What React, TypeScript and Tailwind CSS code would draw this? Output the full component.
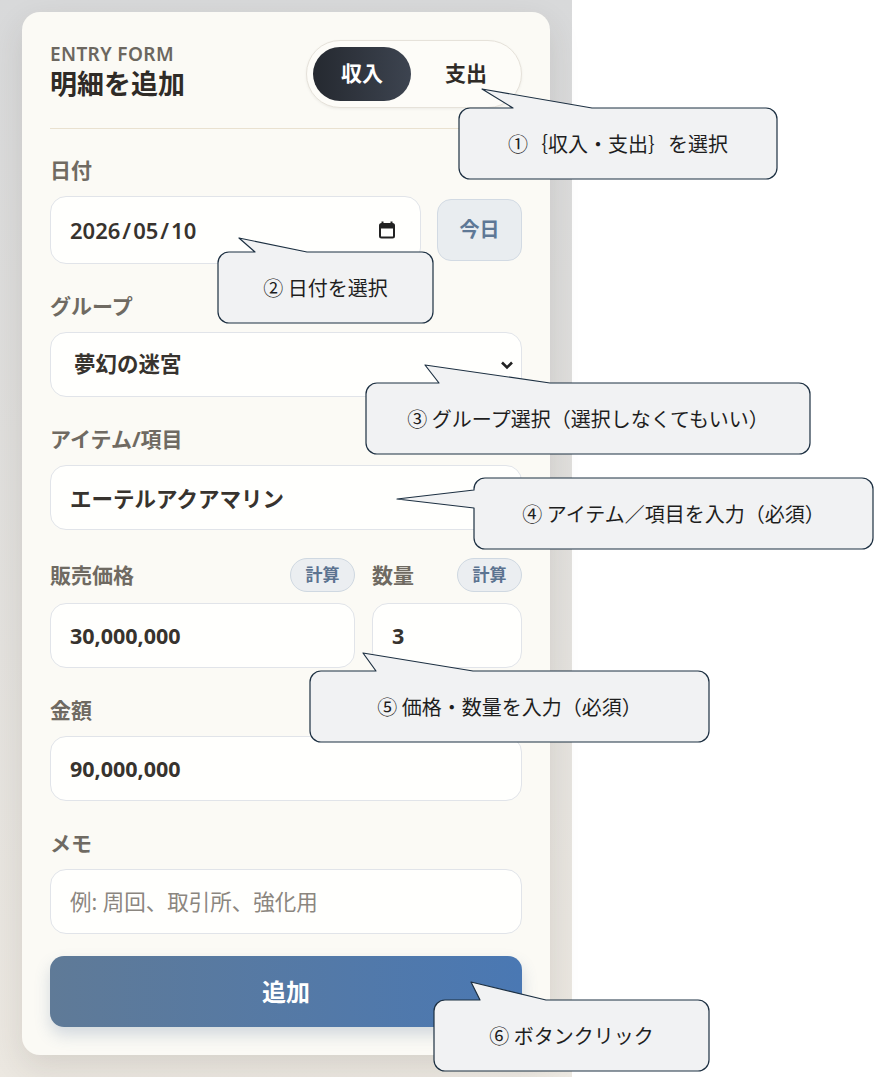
import React from "react";

type Tail = { side: "top" | "left"; a: number; b: number; tx: number; ty: number };

function calloutPath(w: number, h: number, r: number, t: Tail) {
  const arc = (x: number, y: number) => `A ${r} ${r} 0 0 1 ${x} ${y}`;
  if (t.side === "top") {
    return `M ${r} 0 L ${t.a} 0 L ${t.tx} ${t.ty} L ${t.b} 0 L ${w - r} 0 ${arc(w, r)} L ${w} ${h - r} ${arc(w - r, h)} L ${r} ${h} ${arc(0, h - r)} L 0 ${r} ${arc(r, 0)} Z`;
  }
  return `M ${r} 0 L ${w - r} 0 ${arc(w, r)} L ${w} ${h - r} ${arc(w - r, h)} L ${r} ${h} ${arc(0, h - r)} L 0 ${t.b} L ${t.tx} ${t.ty} L 0 ${t.a} L 0 ${r} ${arc(r, 0)} Z`;
}

function Callout({ className, w, h, tail, children }: { className: string; w: number; h: number; tail: Tail; children: React.ReactNode }) {
  return (
    <div className={`absolute flex items-center justify-center ${className}`}>
      <svg className="absolute left-0 top-0 overflow-visible" width={w} height={h}>
        <path d={calloutPath(w, h, 11, tail)} fill="#f1f2f3" stroke="#1d3042" strokeWidth="1.2" strokeLinejoin="round" />
      </svg>
      <span className="relative whitespace-nowrap font-['Noto_Sans_CJK_JP',sans-serif] text-[20px] text-[#1e1e1e]">{children}</span>
    </div>
  );
}

function Label({ children }: { children: React.ReactNode }) {
  return <div className="text-[21px] font-bold leading-[28px] text-[#6f6a62]">{children}</div>;
}

function CalcPill() {
  return (
    <button className="h-[34px] w-[65px] rounded-full border border-[#cfd8e1] bg-[#ebeef1] text-[17px] font-bold text-[#5b7390]">
      計算
    </button>
  );
}

const box = "h-[65px] w-full rounded-[16px] border border-[#e1e4e9] bg-[#fffffd] px-[19px] text-[21.5px] font-bold text-[#37332e] outline-none";

export default function App() {
  return (
    <div className="relative flex h-[1077px] w-[874px] overflow-hidden bg-white font-['Noto_Sans','Noto_Sans_CJK_JP',sans-serif]">
      <div className="h-full w-[572px] bg-gradient-to-b from-[#d8d9da] to-[#ece8e1] pl-[22px] pt-[12px]">
        <div className="w-[528px] rounded-[18px] bg-[#fbfaf5] p-[28px] shadow-[0_12px_32px_rgba(60,50,40,0.12)]">
          <div className="flex items-center justify-between">
            <div>
              <div className="text-[19px] font-semibold leading-[20px] tracking-[0.02em] text-[#6c675f]">ENTRY FORM</div>
              <div className="text-[27px] font-bold leading-[40px] text-[#2f2b27]">明細を追加</div>
            </div>
            <div className="flex gap-[6px] rounded-full border border-[#e6e2da] bg-[#fdfcf8] p-[6px] shadow-[0_1px_3px_rgba(0,0,0,0.06)]">
              <button className="h-[54px] w-[98px] rounded-full bg-gradient-to-r from-[#252930] to-[#3d4450] text-[21px] font-bold text-white">
                収入
              </button>
              <button className="h-[54px] w-[98px] rounded-full text-[21px] font-bold text-[#2f2b27]">支出</button>
            </div>
          </div>

          <div className="mt-[20px] h-px bg-[#e9e1d0]" />

          <div className="mt-[27px] flex flex-col gap-[28px]">
            <div>
              <Label>日付</Label>
              <div className="mt-[12px] flex items-center gap-[16px]">
                <div className="flex h-[68px] flex-1 items-center justify-between rounded-[16px] border border-[#e1e4e9] bg-[#fffffd] pl-[19px] pr-[24px]">
                  <span className="text-[22px] font-semibold text-[#37332e]">
                    2026<span className="px-[2px]">/</span>05<span className="px-[2px]">/</span>10
                  </span>
                  <svg width="18" height="18" viewBox="0 0 18 18">
                    <path d="M4.5 0.5v3M13.5 0.5v3" stroke="#222" strokeWidth="2" />
                    <rect x="2" y="3" width="14" height="13.5" rx="1.5" fill="none" stroke="#222" strokeWidth="2" />
                    <rect x="2" y="3" width="14" height="4.5" fill="#222" />
                  </svg>
                </div>
                <button className="h-[62px] w-[85px] rounded-[14px] border border-[#d2dae3] bg-[#e9edf0] text-[20px] font-bold text-[#5e7896]">
                  今日
                </button>
              </div>
            </div>

            <div>
              <Label>グループ</Label>
              <div className="mt-[12px] flex h-[65px] items-center justify-between rounded-[16px] border border-[#e1e4e9] bg-[#fffffd] pl-[23px] pr-[7px]">
                <span className="text-[21.5px] font-bold text-[#37332e]">夢幻の迷宮</span>
                <svg width="14" height="10" viewBox="0 0 14 10">
                  <path d="M2 2.5l5 5 5-5" fill="none" stroke="#222" strokeWidth="2.6" />
                </svg>
              </div>
            </div>

            <div>
              <Label>アイテム/項目</Label>
              <input className={`mt-[12px] ${box}`} readOnly value="エーテルアクアマリン" />
            </div>

            <div className="grid grid-cols-[305px_1fr] gap-x-[17px]">
              <div>
                <div className="mb-[11px] flex h-[34px] items-center justify-between">
                  <Label>販売価格</Label>
                  <CalcPill />
                </div>
                <input className={box} readOnly value="30,000,000" />
              </div>
              <div>
                <div className="mb-[11px] flex h-[34px] items-center justify-between">
                  <Label>数量</Label>
                  <CalcPill />
                </div>
                <input className={box} readOnly value="3" />
              </div>
            </div>

            <div>
              <Label>金額</Label>
              <input className={`mt-[12px] ${box}`} readOnly value="90,000,000" />
            </div>

            <div>
              <Label>メモ</Label>
              <input
                className={`mt-[12px] ${box} placeholder:font-normal placeholder:text-[#8b867f]`}
                placeholder="例: 周回、取引所、強化用"
              />
            </div>
          </div>

          <button className="mt-[22px] h-[71px] w-full rounded-[14px] bg-gradient-to-r from-[#5f7a97] to-[#4a78b3] text-[24px] font-bold text-white shadow-[0_8px_16px_rgba(70,100,140,0.22)]">
            追加
          </button>
        </div>
      </div>

      <Callout className="left-[459px] top-[108px] h-[71px] w-[318px]" w={318} h={71} tail={{ side: "top", a: 54, b: 133, tx: 23, ty: -19 }}>
        ①｛収入・支出｝を選択
      </Callout>
      <Callout className="left-[218px] top-[252px] h-[71px] w-[215px]" w={215} h={71} tail={{ side: "top", a: 37, b: 89, tx: 21, ty: -14 }}>
        ② 日付を選択
      </Callout>
      <Callout className="left-[366px] top-[383px] h-[71px] w-[444px]" w={444} h={71} tail={{ side: "top", a: 73, b: 184, tx: 59, ty: -18 }}>
        ③ グループ選択（選択しなくてもいい）
      </Callout>
      <Callout className="left-[474px] top-[478px] h-[71px] w-[399px]" w={399} h={71} tail={{ side: "left", a: 12, b: 30, tx: -77, ty: 21 }}>
        ④ アイテム／項目を入力（必須）
      </Callout>
      <Callout className="left-[310px] top-[671px] h-[71px] w-[399px]" w={399} h={71} tail={{ side: "top", a: 66, b: 163, tx: 53, ty: -18 }}>
        ⑤ 価格・数量を入力（必須）
      </Callout>
      <Callout className="left-[434px] top-[1000px] h-[71px] w-[275px]" w={275} h={71} tail={{ side: "top", a: 46, b: 112, tx: 37, ty: -18 }}>
        ⑥ ボタンクリック
      </Callout>
    </div>
  );
}
